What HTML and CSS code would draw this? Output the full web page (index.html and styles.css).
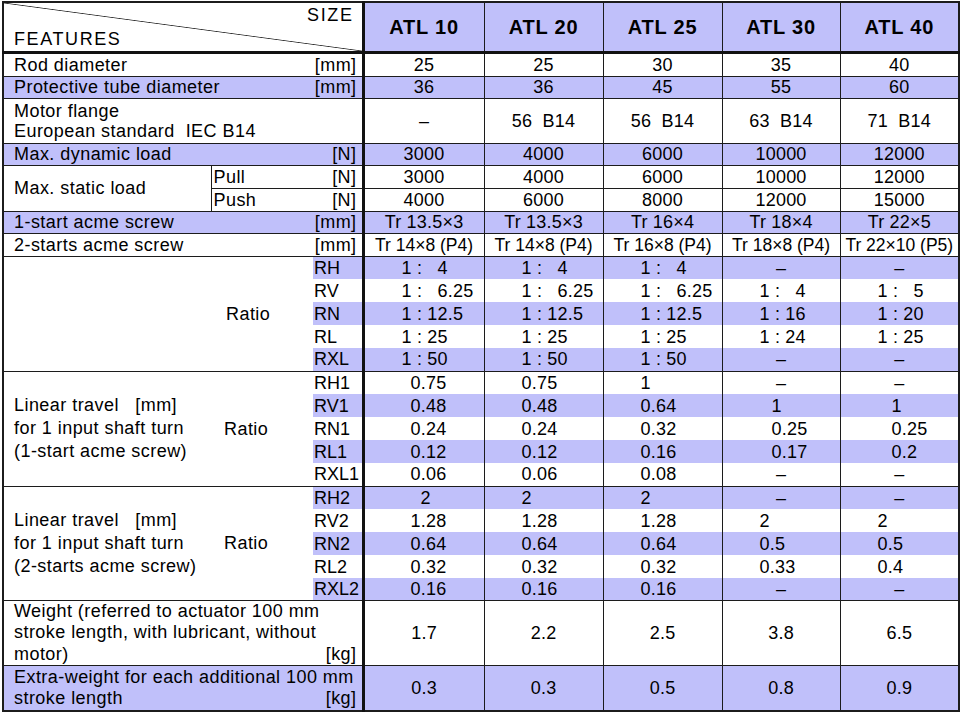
FILE: index.html
```html
<!DOCTYPE html>
<html>
<head>
<meta charset="utf-8">
<title>ATL features</title>
<link rel="stylesheet" href="styles.css">
</head>
<body>
<table class="spec">
  <colgroup>
    <col class="w1"><col class="w2"><col class="w3">
    <col class="wa"><col class="wb"><col class="wb"><col class="wc"><col class="wb">
  </colgroup>
  <tr class="head">
    <td colspan="3" class="corner"><div class="size">SIZE</div><div class="feat">FEATURES</div></td>
    <th>ATL 10</th><th>ATL 20</th><th>ATL 25</th><th>ATL 30</th><th>ATL 40</th>
  </tr>
  <tr class="h24">
    <td colspan="3" class="lab"><div class="lu"><span>Rod diameter</span><span>[mm]</span></div></td>
    <td>25</td><td>25</td><td>30</td><td>35</td><td>40</td>
  </tr>
  <tr class="h22 hl">
    <td colspan="3" class="lab"><div class="lu"><span>Protective tube diameter</span><span>[mm]</span></div></td>
    <td>36</td><td>36</td><td>45</td><td>55</td><td>60</td>
  </tr>
  <tr class="h45">
    <td colspan="3" class="lab"><div>Motor flange</div><div>European standard&nbsp; IEC B14</div></td>
    <td>–</td><td>56&nbsp; B14</td><td>56&nbsp; B14</td><td>63&nbsp; B14</td><td>71&nbsp; B14</td>
  </tr>
  <tr class="h22 hl">
    <td colspan="3" class="lab"><div class="lu"><span>Max. dynamic load</span><span>[N]</span></div></td>
    <td>3000</td><td>4000</td><td>6000</td><td>10000</td><td>12000</td>
  </tr>
  <tr class="h23">
    <td rowspan="2" class="lab">Max. static load</td>
    <td colspan="2" class="lab sub"><div class="lu"><span>Pull</span><span>[N]</span></div></td>
    <td>3000</td><td>4000</td><td>6000</td><td>10000</td><td>12000</td>
  </tr>
  <tr class="h23">
    <td colspan="2" class="lab sub"><div class="lu"><span>Push</span><span>[N]</span></div></td>
    <td>4000</td><td>6000</td><td>8000</td><td>12000</td><td>15000</td>
  </tr>
  <tr class="h22 hl">
    <td colspan="3" class="lab"><div class="lu"><span>1-start acme screw</span><span>[mm]</span></div></td>
    <td>Tr 13.5×3</td><td>Tr 13.5×3</td><td>Tr 16×4</td><td>Tr 18×4</td><td>Tr 22×5</td>
  </tr>
  <tr class="h23 tr2">
    <td colspan="3" class="lab"><div class="lu"><span>2-starts acme screw</span><span>[mm]</span></div></td>
    <td>Tr 14×8 (P4)</td><td>Tr 14×8 (P4)</td><td>Tr 16×8 (P4)</td><td>Tr 18×8 (P4)</td><td>Tr 22×10 (P5)</td>
  </tr>

  <tr class="h23 g1 hl">
    <td colspan="2" rowspan="5" class="rs ratio1">Ratio</td>
    <td class="code">RH</td>
    <td class="l40">1 : <span class="ip">4</span></td><td class="l40">1 : <span class="ip">4</span></td><td class="l40">1 : <span class="ip">4</span></td><td>–</td><td>–</td>
  </tr>
  <tr class="h23 g2">
    <td class="code">RV</td>
    <td class="l40">1 : <span class="ip">6</span>.25</td><td class="l40">1 : <span class="ip">6</span>.25</td><td class="l40">1 : <span class="ip">6</span>.25</td><td class="l40">1 : <span class="ip">4</span></td><td class="l40">1 : <span class="ip">5</span></td>
  </tr>
  <tr class="h23 g2 hl">
    <td class="code">RN</td>
    <td class="l40">1 : <span class="ip">12</span>.5</td><td class="l40">1 : <span class="ip">12</span>.5</td><td class="l40">1 : <span class="ip">12</span>.5</td><td class="l40">1 : <span class="ip">16</span></td><td class="l40">1 : <span class="ip">20</span></td>
  </tr>
  <tr class="h23 g2">
    <td class="code">RL</td>
    <td class="l40">1 : <span class="ip">25</span></td><td class="l40">1 : <span class="ip">25</span></td><td class="l40">1 : <span class="ip">25</span></td><td class="l40">1 : <span class="ip">24</span></td><td class="l40">1 : <span class="ip">25</span></td>
  </tr>
  <tr class="h23 g3 hl">
    <td class="code">RXL</td>
    <td class="l40">1 : <span class="ip">50</span></td><td class="l40">1 : <span class="ip">50</span></td><td class="l40">1 : <span class="ip">50</span></td><td>–</td><td>–</td>
  </tr>

  <tr class="h23 g1">
    <td rowspan="5" class="rs lab lin">Linear travel&nbsp;&nbsp; [mm]<br>for 1 input shaft turn<br>(1-start acme screw)</td>
    <td rowspan="5" class="rs ratio2">Ratio</td>
    <td class="code">RH1</td>
    <td class="l48">0.75</td><td class="l40">0.75</td><td class="l40">1</td><td>–</td><td>–</td>
  </tr>
  <tr class="h23 g2 hl">
    <td class="code">RV1</td>
    <td class="l48">0.48</td><td class="l40">0.48</td><td class="l40">0.64</td><td class="l51">1</td><td class="l53">1</td>
  </tr>
  <tr class="h23 g2">
    <td class="code">RN1</td>
    <td class="l48">0.24</td><td class="l40">0.24</td><td class="l40">0.32</td><td class="l51">0.25</td><td class="l53">0.25</td>
  </tr>
  <tr class="h23 g2 hl">
    <td class="code">RL1</td>
    <td class="l48">0.12</td><td class="l40">0.12</td><td class="l40">0.16</td><td class="l51">0.17</td><td class="l53">0.2</td>
  </tr>
  <tr class="h23 g3">
    <td class="code">RXL1</td>
    <td class="l48">0.06</td><td class="l40">0.06</td><td class="l40">0.08</td><td>–</td><td>–</td>
  </tr>

  <tr class="h23 g1 hl">
    <td rowspan="5" class="rs lab lin">Linear travel&nbsp;&nbsp; [mm]<br>for 1 input shaft turn<br>(2-starts acme screw)</td>
    <td rowspan="5" class="rs ratio2">Ratio</td>
    <td class="code">RH2</td>
    <td class="l58">2</td><td class="l40">2</td><td class="l40">2</td><td>–</td><td>–</td>
  </tr>
  <tr class="h23 g2">
    <td class="code">RV2</td>
    <td class="l48">1.28</td><td class="l40">1.28</td><td class="l40">1.28</td><td class="l40">2</td><td class="l40">2</td>
  </tr>
  <tr class="h23 g2 hl">
    <td class="code">RN2</td>
    <td class="l48">0.64</td><td class="l40">0.64</td><td class="l40">0.64</td><td class="l40">0.5</td><td class="l40">0.5</td>
  </tr>
  <tr class="h23 g2">
    <td class="code">RL2</td>
    <td class="l48">0.32</td><td class="l40">0.32</td><td class="l40">0.32</td><td class="l40">0.33</td><td class="l40">0.4</td>
  </tr>
  <tr class="h22 g3 hl">
    <td class="code">RXL2</td>
    <td class="l48">0.16</td><td class="l40">0.16</td><td class="l40">0.16</td><td>–</td><td>–</td>
  </tr>

  <tr class="h65">
    <td colspan="3" class="lab multi">
      <div>Weight (referred to actuator 100 mm</div>
      <div>stroke length, with lubricant, without</div>
      <div class="lu"><span>motor)</span><span>[kg]</span></div>
    </td>
    <td>1.7</td><td>2.2</td><td>2.5</td><td>3.8</td><td>6.5</td>
  </tr>
  <tr class="h45 hl">
    <td colspan="3" class="lab multi">
      <div>Extra-weight for each additional 100 mm</div>
      <div class="lu"><span>stroke length</span><span>[kg]</span></div>
    </td>
    <td>0.3</td><td>0.3</td><td>0.5</td><td>0.8</td><td>0.9</td>
  </tr>
</table>
</body>
</html>
```

FILE: styles.css
```css
html, body {
  margin: 0;
  padding: 0;
  background: #ffffff;
}

body {
  font-family: "Liberation Sans", Arial, sans-serif;
  color: #000000;
}

.spec {
  border-collapse: collapse;
  table-layout: fixed;
  width: 956px;
  margin: 1px 0 0 2px;
  border: 2px solid #1c1c1c;
  font-size: 18px;
  letter-spacing: 0.2px;
}

col.w1 { width: 208px; }
col.w2 { width: 102px; }
col.w3 { width: 50px; }
col.wa { width: 121px; border-left: 3px solid #111111; }
col.wb { width: 119px; }
col.wc { width: 118px; }

.spec td,
.spec th {
  border: 1px solid #1c1c1c;
  padding: 0;
  text-align: center;
  vertical-align: middle;
  line-height: 20px;
  white-space: nowrap;
  overflow: hidden;
}

.head { height: 50px; }
.head th {
  background: #c0c0fa;
  font-size: 20px;
  letter-spacing: 0.8px;
  font-weight: bold;
  border-bottom: 3px solid #111111;
}

.corner {
  vertical-align: top !important;
  text-align: left !important;
  border-bottom: 3px solid #111111 !important;
  background: linear-gradient(to top right, transparent calc(50% - 0.8px), #333333 50%, transparent calc(50% + 0.8px));
  padding: 2px 0 0 0 !important;
}
.corner .size {
  text-align: right;
  padding-right: 8px;
  letter-spacing: 1.6px;
}
.corner .feat {
  padding-left: 10px;
  margin-top: 4px;
  letter-spacing: 1.6px;
}

.h22 { height: 22px; }
.h23 { height: 23px; }
.h24 { height: 24px; }
.h45 { height: 45px; }
.h65 { height: 65px; }

.hl td { background: #c0c0fa; }
.hl td.rs { background: #ffffff; }

.spec td.lab {
  text-align: left;
  padding: 0 5px 0 10px;
  letter-spacing: 0.45px;
}
.spec td.sub { padding-left: 2px; }

.lu {
  display: flex;
  justify-content: space-between;
}

.spec td.multi { line-height: 21.5px; vertical-align: top; }
.h45 td.multi { line-height: 21px; padding-top: 1px; }

.tr2 td { letter-spacing: 0; font-size: 17.5px; }
.tr2 td.lab { font-size: 18px; letter-spacing: 0.45px; }

/* grouped ratio rows: no inner horizontal rules */
.g1 td:not(.rs) { border-bottom: none; }
.g2 td { border-top: none; border-bottom: none; }
.g3 td { border-top: none; }

.spec td.rs { border-right: none; }
.spec td.code {
  border-left: none;
  text-align: left;
  padding-left: 1px;
  letter-spacing: 0;
}

.spec td.ratio1 {
  text-align: left;
  padding-left: 222px;
  letter-spacing: 0.45px;
}
.spec td.ratio2 {
  text-align: left;
  padding-left: 13px;
  border-left: none;
  letter-spacing: 0.45px;
}
.spec td.lin {
  line-height: 23px;
  border-right: none;
}

.ip {
  display: inline-block;
  width: 20.4px;
  text-align: right;
}

.spec td.l40 { text-align: left; padding-left: 37px; }
.spec td.l48 { text-align: left; padding-left: 46px; }
.spec td.l51 { text-align: left; padding-left: 49px; }
.spec td.l53 { text-align: left; padding-left: 51px; }
.spec td.l58 { text-align: left; padding-left: 56px; }
```
